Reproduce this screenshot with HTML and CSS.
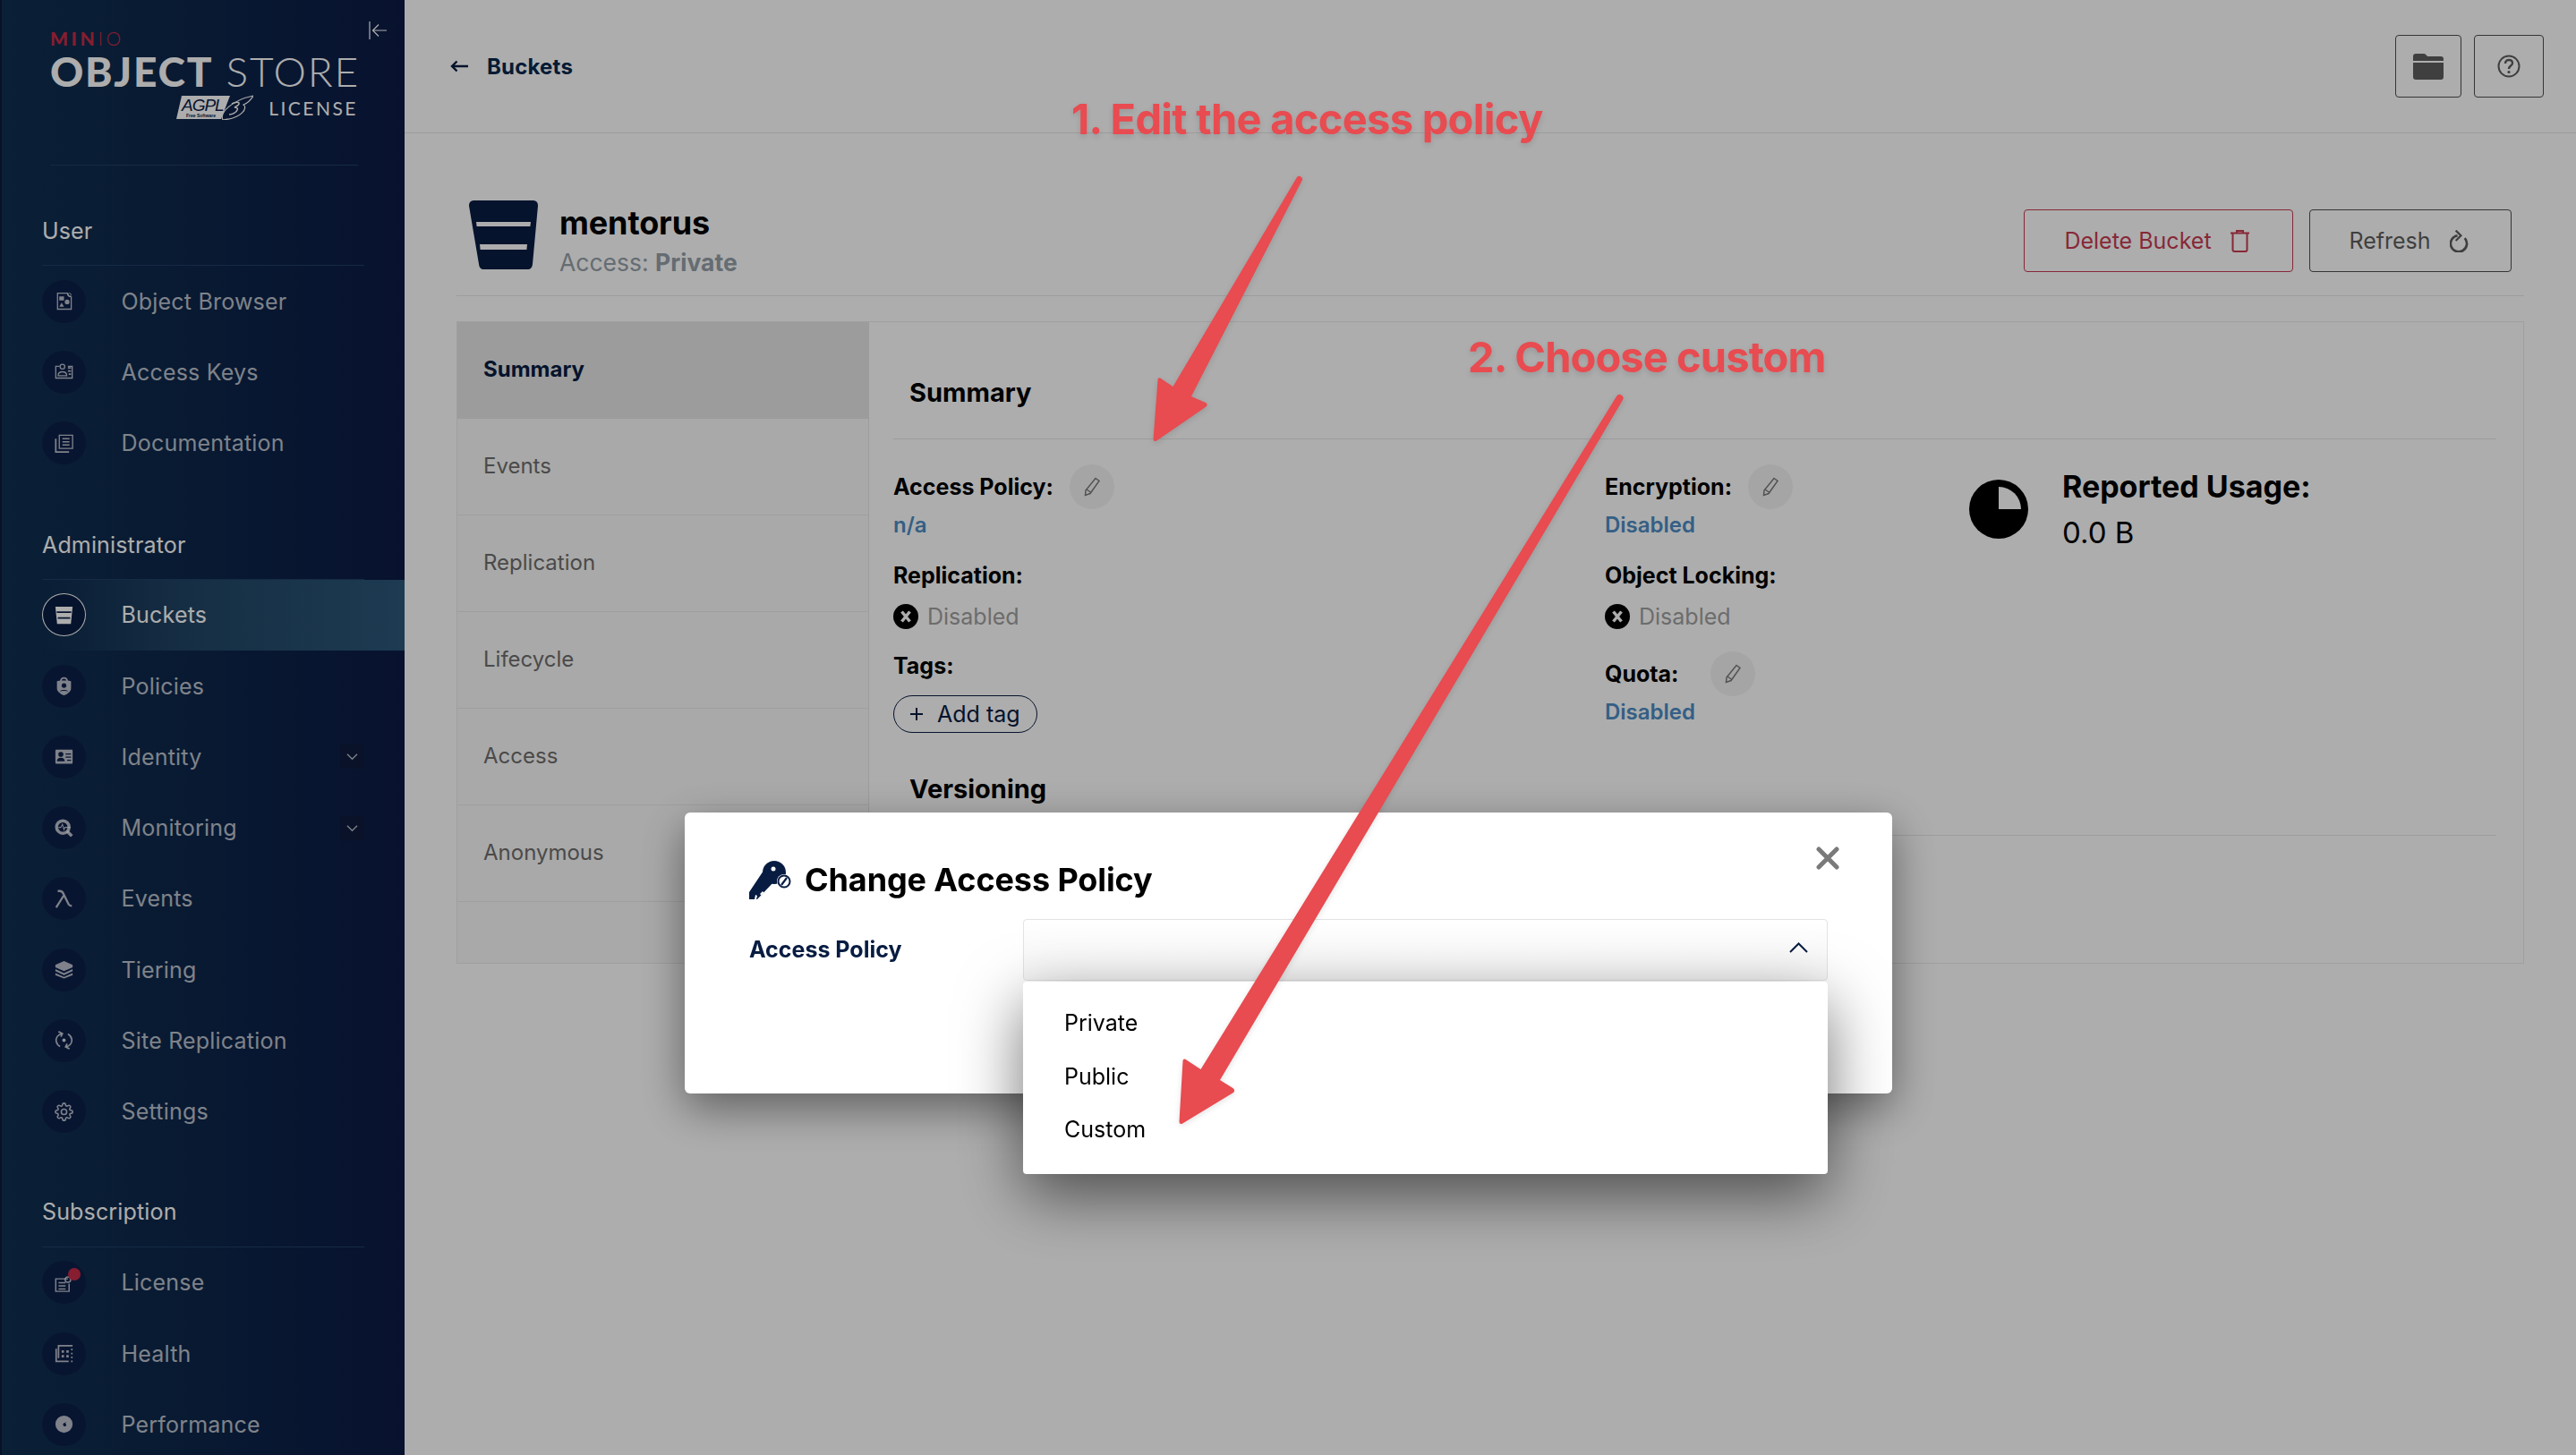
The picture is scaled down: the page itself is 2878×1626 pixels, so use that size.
FILE: index.html
```html
<!DOCTYPE html>
<html lang="en">
<head>
  <meta charset="UTF-8">
  <title>MinIO Object Store - Buckets</title>
  <link rel="stylesheet" href="styles.css">
</head>
<body>
  <div class="app">
    <!-- sidebar -->
    <aside class="sidebar">
      <svg class="collapse" viewBox="0 0 20 20" fill="none" stroke="currentColor" stroke-width="1.2"><path d="M1 0v20M20 10H5M11 3.500L4.500 10l6.500 6.500"/></svg>
      <div class="logo">
        <div class="logo-minio">MIN<span>IO</span></div>
        <div class="logo-title"><b>OBJECT</b> STORE</div>
        <div class="logo-license">
          <svg class="agpl" viewBox="0 0 86 28">
            <path d="M6 1h54L50 27H0z" fill="#fff"/>
            <path d="M52 28C48 20 62 6 86 1c-3 5-6 8-11 10 5 3-1 15-23 17z" fill="#0c2046" stroke="#fff" stroke-width="1.200"/>
            <path d="M62 10c4-2 7-2 8-1 1 2-3 4-5 5 3 0 4 1 3 3-1 3-6 5-9 5" fill="none" stroke="#fff" stroke-width="1.500"/>
            <text x="6" y="18" class="agpl-text">AGPL</text>
            <text x="11" y="25" class="agpl-small">Free Software</text>
          </svg>
          <span>LICENSE</span>
        </div>
      </div>

      <div class="nav-title">User</div>
      <a class="nav-item"><span class="nav-icon"><svg viewBox="0 0 24 24" fill="currentColor"><path d="M3 1h14a5 5 0 0 0 5 5v17H3zM4.500 2.500v19h16V7.200a6 6 0 0 1-4.800-4.700z" fill-rule="evenodd"/><path d="M6 6h6v5H6zM6 19l3-5 3 5z"/><circle cx="16" cy="13" r="3"/><circle cx="19" cy="4" r="2" fill="none" stroke="currentColor"/></svg></span>Object Browser</a>
      <a class="nav-item"><span class="nav-icon"><svg viewBox="0 0 24 24" fill="none" stroke="currentColor" stroke-width="1.500"><path d="M6 5H1.500v15h21V5H17"/><circle cx="10" cy="5.500" r="3"/><path d="M4.500 17c0-4 2-5 5.500-5s5.500 1 5.500 5z"/><path d="M17 7h4M17 11h4M18 15h3" stroke-width="2"/></svg></span>Access Keys</a>
      <a class="nav-item"><span class="nav-icon"><svg viewBox="0 0 24 24" fill="none" stroke="currentColor" stroke-width="1.500"><path d="M6 1.500h17v17H6zM10 6h9M10 10h9M10 14h9"/><path d="M1.500 6v17h17" stroke-width="2"/></svg></span>Documentation</a>

      <div class="nav-title nav-title-admin">Administrator</div>
      <a class="nav-item active"><span class="nav-icon"><svg viewBox="0 0 24 24" fill="currentColor"><path d="M1 1h22l-2.200 22H3.200zM2.700 7l.2 2h18.200l.2-2zM4 14.500l.2 2h15.600l.2-2z" fill-rule="evenodd"/></svg></span>Buckets</a>
      <a class="nav-item"><span class="nav-icon"><svg viewBox="0 0 24 24" fill="currentColor"><path d="M12 1a5 5 0 0 1 5 4l4 1v9c0 4-4 7-9 9-5-2-9-5-9-9V6l4-1a5 5 0 0 1 5-4zm0 2a3 3 0 0 0-3 2h6a3 3 0 0 0-3-2zm0 5.500a3 3 0 1 0 0 6 3 3 0 0 0 0-6zM6.500 19c3-1 8-1 11 0-1.500-2.500-9.500-2.500-11 0z" fill-rule="evenodd"/></svg></span>Policies</a>
      <a class="nav-item has-sub"><span class="nav-icon"><svg viewBox="0 0 24 24" fill="currentColor"><path d="M2 3h20a1 1 0 0 1 1 1v16a1 1 0 0 1-1 1H2a1 1 0 0 1-1-1V4a1 1 0 0 1 1-1zm6 3a3.200 3.200 0 1 0 0 6.400A3.200 3.200 0 0 0 8 6zm-5 12h10c0-3-2-4.500-5-4.500S3 15 3 18zM14 8v1.500h7V8zm0 4v1.500h7V12zm2 4v1.500h5V16z" fill-rule="evenodd"/></svg></span>Identity<span class="nav-chevron"><svg viewBox="0 0 14 9" fill="none" stroke="currentColor" stroke-width="1.400"><path d="M1 1.500l6 6 6-6"/></svg></span></a>
      <a class="nav-item has-sub"><span class="nav-icon"><svg viewBox="0 0 24 24" fill="none" stroke="currentColor"><circle cx="10.500" cy="10.500" r="8" stroke-width="4"/><path d="M16 16l6 6" stroke-width="4"/><path d="M5 11h3l2-4 2 7 1-3h7" stroke-width="1.200"/></svg></span>Monitoring<span class="nav-chevron"><svg viewBox="0 0 14 9" fill="none" stroke="currentColor" stroke-width="1.400"><path d="M1 1.500l6 6 6-6"/></svg></span></a>
      <a class="nav-item"><span class="nav-icon"><svg viewBox="0 0 24 24" fill="none" stroke="currentColor" stroke-width="2.600"><path d="M4 2h3c2 0 3 1 4 3l7 14c.7 1.500 2 2 4 2M11.500 8L2 23"/></svg></span>Events</a>
      <a class="nav-item"><span class="nav-icon"><svg viewBox="0 0 24 24" fill="currentColor"><path d="M12 1l11 5v3l-11 5L1 9V6z"/><path d="M1 11.500l11 5 11-5v2.500l-11 5-11-5z"/><path d="M1 16.500l11 5 11-5V19l-11 4.500L1 19z"/></svg></span>Tiering</a>
      <a class="nav-item"><span class="nav-icon"><svg viewBox="0 0 24 24" fill="none" stroke="currentColor" stroke-width="2"><path d="M9 3.500C4 5 1.500 9 2 13c.5 3 2 5.500 5 7M15 20.500c5-1.500 7.500-5.500 7-9.500-.5-3-2-5.500-5-7"/><path d="M5 1l5 2.500-2 4M19 23l-5-2.500 2-4"/><circle cx="12" cy="12" r="1.300" fill="currentColor"/></svg></span>Site Replication</a>
      <a class="nav-item"><span class="nav-icon"><svg viewBox="0 0 24 24" fill="none" stroke="currentColor" stroke-width="1.800"><circle cx="12" cy="12" r="3.500"/><path d="M19.400 15a1.650 1.650 0 0 0 .33 1.820l.06.06a2 2 0 0 1 0 2.830 2 2 0 0 1-2.830 0l-.06-.06a1.650 1.650 0 0 0-1.820-.33 1.650 1.650 0 0 0-1 1.510V21a2 2 0 0 1-2 2 2 2 0 0 1-2-2v-.09A1.650 1.650 0 0 0 9 19.400a1.650 1.650 0 0 0-1.820.33l-.06.06a2 2 0 0 1-2.830 0 2 2 0 0 1 0-2.830l.06-.06a1.650 1.650 0 0 0 .33-1.820 1.650 1.650 0 0 0-1.510-1H3a2 2 0 0 1-2-2 2 2 0 0 1 2-2h.09A1.650 1.650 0 0 0 4.600 9a1.650 1.650 0 0 0-.33-1.820l-.06-.06a2 2 0 0 1 0-2.830 2 2 0 0 1 2.830 0l.06.06a1.650 1.650 0 0 0 1.820.33H9a1.650 1.650 0 0 0 1-1.510V3a2 2 0 0 1 2-2 2 2 0 0 1 2 2v.09a1.650 1.650 0 0 0 1 1.510 1.650 1.650 0 0 0 1.820-.33l.06-.06a2 2 0 0 1 2.830 0 2 2 0 0 1 0 2.830l-.06.06a1.650 1.650 0 0 0-.33 1.820V9a1.650 1.650 0 0 0 1.510 1H21a2 2 0 0 1 2 2 2 2 0 0 1-2 2h-.09a1.650 1.650 0 0 0-1.510 1z"/></svg></span>Settings</a>

      <div class="nav-title nav-title-sub">Subscription</div>
      <a class="nav-item"><span class="nav-icon nav-icon-badge"><svg viewBox="0 0 24 24" fill="none" stroke="currentColor" stroke-width="1.700"><path d="M17 7H1.500v16h17V13M5 12h9M5 16h9M5 20h9"/><circle cx="17" cy="8" r="3.500"/></svg><i class="badge"></i></span>License</a>
      <a class="nav-item"><span class="nav-icon"><svg viewBox="0 0 24 24" fill="currentColor"><path d="M4 1h19v2H6v15H4zM1 6h2v15h15v2H1z"/><path d="M21 21h2v2h-2zM21 16h2v2h-2zM21 6h2v2h-2zM21 11h2v2h-2zM9 8h3v3H9zM15 8h3v3h-3zM9 14h3v3H9zM15 14h3v3h-3z"/></svg></span>Health</a>
      <a class="nav-item"><span class="nav-icon"><svg viewBox="0 0 24 24" fill="currentColor"><path d="M12 1a11 11 0 1 1 0 22 11 11 0 0 1 0-22zm-1 12.500a2 2 0 1 0 2.500-2.500l2-2-3 1.500a2 2 0 0 0-1.500 3z" fill-rule="evenodd"/></svg></span>Performance</a>
    </aside>

    <main class="main">
      <header class="topbar">
        <a class="back"><svg viewBox="0 0 20 14" fill="none" stroke="currentColor" stroke-width="2.400"><path d="M20 7H2M7.500 1.500L2 7l5.500 5.500"/></svg>Buckets</a>
        <div class="topbar-actions">
          <button class="btn-icon btn-folder"><svg viewBox="0 0 34 29" fill="currentColor"><path d="M3 0h9c2 0 3 2 4 3h15a3 3 0 0 1 3 3v2H0V3a3 3 0 0 1 3-3z"/><path d="M0 10h34v16a3 3 0 0 1-3 3H3a3 3 0 0 1-3-3z"/></svg></button>
          <button class="btn-icon btn-help"><svg viewBox="0 0 26 26" fill="none" stroke="currentColor" stroke-width="2"><circle cx="13" cy="13" r="11.500"/><path d="M9 10c0-3 2-4 4-4s4 1 4 3.500c0 3-4 3-4 6.500" stroke-width="2.400"/><circle cx="13" cy="19.500" r="1.600" fill="currentColor" stroke="none"/></svg></button>
        </div>
      </header>

      <div class="content">
        <div class="page-head">
          <svg class="bucket-big" viewBox="0 0 77 77"><path d="M6 0h65c4 0 6 2 6 6l-6 65c-.500 4-2 6-6 6H17c-4 0-5.500-2-6-6L0 6c0-4 2-6 6-6z" fill="#081c42"/><path d="M8 24h61l-.6 5H8.600zM12 49h53l-.6 6H12.600z" fill="#fff"/></svg>
          <div class="page-title">
            <h1>mentorus</h1>
            <div class="page-sub">Access: <b>Private</b></div>
          </div>
          <div class="page-actions">
            <button class="btn btn-danger">Delete Bucket<svg viewBox="0 0 21 25" fill="none" stroke="currentColor" stroke-width="2"><path d="M0 3.500h21M7 3V1h7v2M2.500 4v18c0 1 .7 2 2 2h12c1.300 0 2-1 2-2V4"/></svg></button>
            <button class="btn">Refresh<svg viewBox="0 0 22 25" fill="none" stroke="currentColor" stroke-width="2.800"><path d="M9 6a9.500 9.500 0 1 0 8.500 3"/><path d="M7 0l6 6-6 6" stroke-width="2.400"/></svg></button>
          </div>
        </div>

        <section class="panel">
          <nav class="tabs">
            <a class="tab active">Summary</a>
            <a class="tab">Events</a>
            <a class="tab">Replication</a>
            <a class="tab">Lifecycle</a>
            <a class="tab">Access</a>
            <a class="tab">Anonymous</a>
          </nav>
          <div class="panel-body">
            <h2 class="section-head">Summary</h2>
            <div class="details">
              <div class="col">
                <div class="field">
                  <div class="label-row"><span class="label">Access Policy:</span><span class="edit"><svg viewBox="0 0 20 22" fill="none" stroke="currentColor" stroke-width="1.500"><path d="M14 1.500l4 3-10 14-5.500 2 .5-5.500zM4 14l5 3.500"/></svg></span></div>
                  <div class="value-link">n/a</div>
                </div>
                <div class="field">
                  <div class="label">Replication:</div>
                  <div class="status"><svg viewBox="0 0 28 28"><circle cx="14" cy="14" r="14"/><path d="M9.500 8.500l9 11M18.500 8.500l-9 11" stroke="#fff" stroke-width="3.500"/></svg>Disabled</div>
                </div>
                <div class="field field-tags">
                  <div class="label">Tags:</div>
                  <button class="tag-btn"><svg viewBox="0 0 14 14" fill="none" stroke="currentColor" stroke-width="2"><path d="M7 0v14M0 7h14"/></svg>Add tag</button>
                </div>
              </div>
              <div class="col">
                <div class="field">
                  <div class="label-row"><span class="label">Encryption:</span><span class="edit"><svg viewBox="0 0 20 22" fill="none" stroke="currentColor" stroke-width="1.500"><path d="M14 1.500l4 3-10 14-5.500 2 .5-5.500zM4 14l5 3.500"/></svg></span></div>
                  <div class="value-link">Disabled</div>
                </div>
                <div class="field">
                  <div class="label">Object Locking:</div>
                  <div class="status"><svg viewBox="0 0 28 28"><circle cx="14" cy="14" r="14"/><path d="M9.500 8.500l9 11M18.500 8.500l-9 11" stroke="#fff" stroke-width="3.500"/></svg>Disabled</div>
                </div>
                <div class="field field-tags">
                  <div class="label-row label-row-wide"><span class="label">Quota:</span><span class="edit"><svg viewBox="0 0 20 22" fill="none" stroke="currentColor" stroke-width="1.500"><path d="M14 1.500l4 3-10 14-5.500 2 .5-5.500zM4 14l5 3.500"/></svg></span></div>
                  <div class="value-link">Disabled</div>
                </div>
              </div>
              <div class="usage">
                <svg viewBox="0 0 66 66"><circle cx="33" cy="33" r="33"/><path d="M33 8a25 25 0 0 1 25 25H33z" fill="#fff"/></svg>
                <div>
                  <div class="usage-label">Reported Usage:</div>
                  <div class="usage-value">0.0 B</div>
                </div>
              </div>
            </div>
            <h2 class="section-head section-versioning">Versioning</h2>
          </div>
        </section>
      </div>
    </main>
  </div>

  <!-- dialog over the page -->
  <div class="backdrop">
    <div class="modal">
      <svg class="modal-close" viewBox="0 0 26 26" fill="none" stroke="currentColor" stroke-width="5" stroke-linecap="round"><path d="M3 3l20 20M23 3L3 23"/></svg>
      <div class="modal-title">
        <svg viewBox="0 0 47 43" fill="#081c42"><circle cx="28" cy="13" r="13"/><path d="M18 8L0 35v8h9l19-20z"/><circle cx="27" cy="9" r="2.500" fill="#fff"/><circle cx="39" cy="23" r="8" fill="#fff"/><circle cx="39" cy="23" r="6.500" fill="none" stroke="#081c42" stroke-width="2"/><path d="M36 27l6-8" stroke="#081c42" stroke-width="2.200"/><path d="M6 43l1-5 2 1-1 4zM12 37l3-3 1.500 1.500-3 3z" fill="#fff"/></svg>
        Change Access Policy
      </div>
      <div class="form-row">
        <label class="form-label">Access Policy</label>
        <div class="select">
          <svg viewBox="0 0 21 12" fill="none" stroke="#081c42" stroke-width="2"><path d="M1 11l9.500-9.500L20 11"/></svg>
          <ul class="select-menu">
            <li>Private</li>
            <li>Public</li>
            <li>Custom</li>
          </ul>
        </div>
      </div>
    </div>
  </div>

  <!-- annotations drawn on top of the screenshot -->
  <div class="note note-one">1. Edit the access policy</div>
  <div class="note note-two">2. Choose custom</div>
  <svg class="arrows" viewBox="0 0 2878 1626">
    <path d="M1449 198a3.500 3.500 0 0 1 6 3L1331 443l16 7c2 1 2 3 .500 4.500L1293 492c-2 2-4.500 1-4.500-1.500l5-66c0-2 2-3 3.500-1.500l13.500 9z"/>
    <path d="M1806 443a4 4 0 0 1 7 4L1363 1207l14.500 9c2 1.500 2 3.500 .500 5L1322 1255c-2 2-4.500 1-4.500-1.500l4-68c0-2 2.500-3 4-1l16 10.500z"/>
  </svg>
</body>
</html>
```

FILE: styles.css
```css
* {
  box-sizing: border-box;
}

html, body {
  margin: 0;
  height: 100%;
  overflow: hidden;
}

body {
  font-family: "Inter", "Liberation Sans", sans-serif;
  background: #fff;
  color: #000;
}

.app {
  display: flex;
  height: 1626px;
}

/* sidebar */
.sidebar {
  position: relative;
  flex: 0 0 452px;
  height: 1626px;
  overflow: hidden;
  border-left: 2px solid #0b1a3c;
  background: linear-gradient(90deg, #0f3050, #0c1b45);
  color: #fff;
  padding-left: 45px;
}

.collapse {
  position: absolute;
  top: 24px;
  left: 410px;
  width: 20px;
  height: 20px;
  color: #fff;
}

.logo {
  width: 344px;
  height: 185px;
  margin-left: 9px;
  padding-top: 34px;
  border-bottom: 1px solid #1f3f66;
  font-family: "Lato", sans-serif;
}

.logo-minio {
  font-size: 21px;
  line-height: 18px;
  font-weight: 900;
  letter-spacing: 3.600px;
  color: #c72c48;
}

.logo-minio span {
  font-weight: 300;
}

.logo-title {
  margin-top: 4px;
  font-size: 46px;
  line-height: 48px;
  font-weight: 300;
  letter-spacing: 1.800px;
  white-space: nowrap;
}

.logo-title b {
  font-weight: 900;
}

.logo-license {
  display: flex;
  justify-content: flex-end;
  align-items: center;
  gap: 17px;
  margin-top: 2px;
  font-size: 21px;
  letter-spacing: 2.500px;
}

.agpl {
  width: 86px;
  height: 28px;
}

.agpl-text {
  font-family: "Liberation Sans", sans-serif;
  font-size: 19px;
  font-style: italic;
  font-weight: 400;
  letter-spacing: -1px;
  fill: #0c2046;
}

.agpl-small {
  font-family: "Liberation Sans", sans-serif;
  font-size: 5px;
  font-weight: 700;
  letter-spacing: 0;
  fill: #0c2046;
}

.nav-title {
  width: 360px;
  height: 79px;
  margin-top: 33px;
  padding-top: 23px;
  font-size: 25px;
  line-height: 34px;
  letter-spacing: .15px;
  border-bottom: 1px solid #1f3f66;
}

.nav-title-admin {
  margin-top: 34px;
}

.nav-title-sub {
  margin-top: 32px;
  height: 80px;
}

.nav-item {
  position: relative;
  display: flex;
  align-items: center;
  height: 79.250px;
  font-size: 25px;
  color: rgba(255, 255, 255, .72);
  letter-spacing: .2px;
}

.nav-item.active {
  color: #fff;
  background: linear-gradient(90deg, transparent, #214565 40%, #2b5779);
}

.nav-icon {
  position: relative;
  display: flex;
  flex: 0 0 49px;
  align-items: center;
  justify-content: center;
  width: 49px;
  height: 48px;
  margin-right: 39.500px;
  border-radius: 50%;
  background: #0c1f49;
}

.nav-icon svg {
  width: 21px;
  height: 21px;
}

.nav-item.active .nav-icon {
  background: #0a1c42;
  border: 1px solid #fff;
}

.badge {
  position: absolute;
  top: 8px;
  right: 6px;
  width: 14px;
  height: 14px;
  border-radius: 50%;
  background: #c72c48;
}

.nav-chevron {
  display: flex;
  align-items: center;
  justify-content: center;
  position: absolute;
  left: 333px;
  top: 26px;
  width: 27px;
  height: 27px;
  border-radius: 2px;
  background: #0e1b3d;
}

.nav-chevron svg {
  width: 13px;
  height: 9px;
}

/* main area */
.main {
  flex: 1;
  min-width: 0;
}

.topbar {
  display: flex;
  align-items: center;
  justify-content: space-between;
  height: 149px;
  padding: 0 36px 0 51px;
  border-bottom: 1px solid #e6e6e6;
}

.back {
  display: flex;
  align-items: center;
  gap: 21px;
  font-size: 24px;
  font-weight: 700;
  letter-spacing: .2px;
  color: #07294d;
}

.back svg {
  width: 20px;
  height: 14px;
  color: #081c42;
}

.topbar-actions {
  display: flex;
  gap: 14px;
}

button {
  font-family: inherit;
  background: none;
  padding: 0;
  cursor: pointer;
}

.btn-icon {
  display: flex;
  align-items: center;
  justify-content: center;
  height: 70px;
  border: 1px solid #4e4e4e;
  border-radius: 4px;
  color: #5e5e5e;
}

.btn-folder {
  width: 74px;
}

.btn-folder svg {
  width: 34px;
  height: 29px;
}

.btn-help {
  width: 78px;
}

.btn-help svg {
  width: 26px;
  height: 26px;
}

.content {
  padding: 0 58px;
}

.page-head {
  display: flex;
  align-items: flex-start;
  height: 182px;
  padding: 75px 14px 0 14px;
  border-bottom: 1px solid #e6e6e6;
}

.bucket-big {
  width: 77px;
  height: 77px;
  flex: none;
}

.page-title {
  margin-left: 24px;
  padding-top: 3px;
}

.page-title h1 {
  margin: 0;
  font-size: 36px;
  line-height: 44px;
  font-weight: 700;
  letter-spacing: -.1px;
}

.page-sub {
  margin-top: 6px;
  font-size: 26.500px;
  line-height: 32px;
  color: #969fa9;
}

.page-sub b {
  font-weight: 700;
}

.page-actions {
  display: flex;
  gap: 18px;
  margin-left: auto;
  margin-top: 10px;
}

.btn {
  display: flex;
  align-items: center;
  justify-content: center;
  gap: 21px;
  height: 70px;
  min-width: 226px;
  padding: 0 47px 0 43px;
  border: 1px solid #4e4e4e;
  border-radius: 4px;
  font-size: 25px;
  color: #5e5e5e;
}

.btn-danger {
  width: 301px;
  color: #c83b51;
  border-color: #c83b51;
}

.btn svg {
  width: 21px;
  height: 25px;
}

.panel {
  display: flex;
  margin-top: 28px;
  border: 1px solid #eaeaea;
}

.tabs {
  flex: 0 0 460px;
  padding-bottom: 68px;
  border-right: 1px solid #e6e6e6;
  background: #fafafa;
}

.tab {
  display: flex;
  align-items: center;
  height: 108px;
  padding: 0 0 3px 29px;
  font-size: 24px;
  color: #6e6e6e;
  border-bottom: 1px solid #eaeaea;
}

.tab.active {
  font-weight: 700;
  color: #081c42;
  background: #e6e6e6;
  border-bottom: 0;
}

.panel-body {
  flex: 1;
  padding: 0 30px 0 27px;
}

.section-head {
  margin: 0;
  height: 131px;
  padding: 61px 0 0 18px;
  font-size: 29px;
  line-height: 36px;
  font-weight: 700;
  border-bottom: 1px solid #e6e6e6;
}

.section-versioning {
  height: 113px;
  padding-top: 43px;
}

.details {
  display: grid;
  grid-template-columns: 795px 407px 1fr;
  height: 330px;
  padding-top: 27px;
}

.field + .field {
  margin-top: 22px;
}

.label-row {
  display: flex;
  align-items: center;
  gap: 18px;
  height: 52px;
}

.label-row-wide {
  gap: 36px;
}

.label {
  font-size: 25px;
  line-height: 34px;
  font-weight: 700;
  white-space: nowrap;
}

.edit {
  display: flex;
  align-items: center;
  justify-content: center;
  width: 50px;
  height: 50px;
  border-radius: 50%;
  background: #f4f4f4;
  color: #7a7a7a;
}

.edit svg {
  width: 20px;
  height: 22px;
}

.value-link {
  font-size: 24px;
  line-height: 34px;
  font-weight: 600;
  color: #4d8cc4;
}

.status {
  display: flex;
  align-items: center;
  gap: 10px;
  height: 33px;
  margin-top: 12px;
  font-size: 25px;
  color: #a0a0a0;
}

.status svg {
  width: 28px;
  height: 28px;
}

.tag-btn {
  display: flex;
  align-items: center;
  gap: 16px;
  height: 42px;
  margin-top: 16px;
  padding: 0 18px;
  border: 1px solid #081c42;
  border-radius: 21px;
  font-size: 25px;
  color: #081c42;
}

.tag-btn svg {
  width: 14px;
  height: 14px;
}

.usage {
  display: flex;
  align-items: flex-start;
  gap: 38px;
  padding-top: 6px;
}

.usage svg {
  flex: none;
  width: 66px;
  height: 66px;
  margin-top: 12px;
}

.usage-label {
  font-size: 34px;
  line-height: 40px;
  font-weight: 700;
  white-space: nowrap;
}

.usage-value {
  margin-top: 11px;
  font-size: 33px;
  line-height: 40px;
}

/* dialog */
.backdrop {
  position: fixed;
  inset: 0;
  display: flex;
  justify-content: center;
  align-items: flex-start;
  padding: 908px 0 0 1px;
  background: rgba(0, 0, 0, .32);
}

.modal {
  position: relative;
  width: 1349px;
  height: 314px;
  padding: 53px 72px 0 72px;
  border-radius: 6px;
  background: #fff;
  box-shadow: 0 16px 50px rgba(0, 0, 0, .45);
}

.modal-close {
  position: absolute;
  top: 38px;
  right: 59px;
  width: 26px;
  height: 26px;
  color: #7a7a7a;
}

.modal-title {
  display: flex;
  align-items: center;
  gap: 15px;
  font-size: 36px;
  line-height: 44px;
  font-weight: 700;
  letter-spacing: -.1px;
}

.modal-title svg {
  width: 47px;
  height: 43px;
}

.form-row {
  display: flex;
  align-items: center;
  margin-top: 22px;
}

.form-label {
  flex: 0 0 306px;
  font-size: 25px;
  font-weight: 700;
  color: #081c42;
  padding-bottom: 1px;
}

.select {
  position: relative;
  display: flex;
  align-items: center;
  justify-content: flex-end;
  width: 899px;
  height: 69px;
  padding-right: 21px;
  border: 1px solid #e3e3e3;
  border-radius: 4px;
  background: linear-gradient(#fff, #f6f6f6);
}

.select > svg {
  width: 21px;
  height: 12px;
  margin-top: -6px;
}

.select-menu {
  position: absolute;
  top: 69px;
  left: -1px;
  width: 899px;
  height: 215px;
  margin: 0;
  padding: 17px 0 0 46px;
  list-style: none;
  border-radius: 4px;
  background: #fff;
  box-shadow: 0 24px 70px rgba(0, 0, 0, .55);
}

.select-menu li {
  height: 59.500px;
  font-size: 25px;
  line-height: 59.500px;
}

/* annotations */
.note {
  position: absolute;
  font-size: 47px;
  line-height: 56px;
  font-weight: 700;
  letter-spacing: -.7px;
  color: #e84b50;
  text-shadow: 0 3px 6px rgba(0, 0, 0, .12);
  white-space: nowrap;
}

.note-one {
  top: 105px;
  left: 1197px;
}

.note-two {
  top: 371px;
  left: 1640px;
  letter-spacing: -.9px;
}

.arrows {
  position: absolute;
  top: 0;
  left: 0;
  width: 2878px;
  height: 1626px;
  fill: #e84b50;
  filter: drop-shadow(0 2px 3px rgba(0, 0, 0, .12));
  pointer-events: none;
}
```
